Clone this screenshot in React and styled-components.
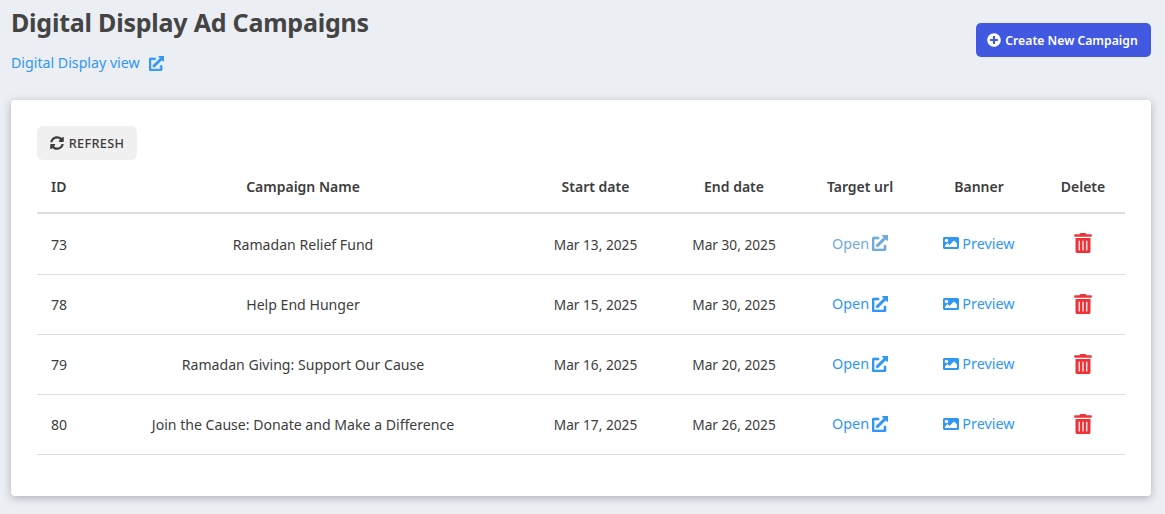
import React from "react";
import styled, { createGlobalStyle } from "styled-components";
import { FaExternalLinkAlt, FaImage, FaPlusCircle, FaSyncAlt, FaTrashAlt } from "react-icons/fa";

const campaigns = [
  { id: 73, name: "Ramadan Relief Fund", start: "Mar 13, 2025", end: "Mar 30, 2025", faded: true },
  { id: 78, name: "Help End Hunger", start: "Mar 15, 2025", end: "Mar 30, 2025" },
  { id: 79, name: "Ramadan Giving: Support Our Cause", start: "Mar 16, 2025", end: "Mar 20, 2025" },
  { id: 80, name: "Join the Cause: Donate and Make a Difference", start: "Mar 17, 2025", end: "Mar 26, 2025" },
];

const GlobalStyle = createGlobalStyle`
  html, body {
    margin: 0;
    background: #ebeef3;
    font-family: "Noto Sans", "Open Sans", sans-serif;
  }
`;

const Page = styled.div`
  height: 514px;
  padding: 0 14px 0 11px;
  box-sizing: border-box;
  overflow: hidden;
`;

const Header = styled.header`
  display: flex;
  justify-content: space-between;
  align-items: flex-start;
  height: 84px;
  border-bottom: 1px solid #e8ebf0;
  margin-bottom: 15px;
`;

const Title = styled.h1`
  margin: 5px 0 0;
  font-size: 25px;
  line-height: 34px;
  font-weight: 700;
  color: #444;
  letter-spacing: -0.22px;
`;

const ViewLink = styled.a`
  display: flex;
  align-items: center;
  gap: 9px;
  margin-top: 13px;
  font-size: 14.2px;
  line-height: 22px;
  color: #3097f5;
  svg {
    font-size: 15px;
    stroke: currentColor;
    stroke-width: 20;
  }
`;

const CreateButton = styled.button`
  display: flex;
  align-items: center;
  justify-content: center;
  gap: 4px;
  width: 175px;
  height: 34px;
  margin-top: 23px;
  padding: 0 2px 0 0;
  border: 0;
  border-radius: 5px;
  background: #4059e0;
  color: #fff;
  font-family: inherit;
  font-size: 12.2px;
  font-weight: 600;
  svg {
    font-size: 14px;
  }
`;

const Card = styled.section`
  height: 396px;
  box-sizing: border-box;
  padding: 26px 26px 0;
  background: #fff;
  border-radius: 4px;
  box-shadow: 0 2px 8px rgba(60, 64, 80, 0.35);
`;

const RefreshButton = styled.button`
  display: flex;
  align-items: center;
  justify-content: center;
  gap: 5px;
  width: 100px;
  height: 34px;
  padding: 0;
  border: 0;
  border-radius: 6px;
  background: #f0f0f0;
  color: #3c3c3c;
  font-family: inherit;
  font-size: 12.7px;
  font-weight: 500;
  letter-spacing: 0.3px;
  svg {
    font-size: 14px;
  }
`;

const Table = styled.table`
  width: 1088px;
  table-layout: fixed;
  border-collapse: separate;
  border-spacing: 0;
  color: #3d3d3d;
`;

const HeadCell = styled.th`
  box-sizing: border-box;
  height: 54px;
  padding: 0 0 0 ${(p) => (p.$left ? "14px" : "0")};
  border-bottom: 2px solid #dcdcdc;
  text-align: ${(p) => (p.$left ? "left" : "center")};
  font-size: 14px;
  font-weight: 600;
`;

const Row = styled.tr`
  height: 60px;
  &:first-child {
    height: 61px;
  }
`;

const Cell = styled.td`
  box-sizing: border-box;
  padding: 0 0 0 ${(p) => (p.$left ? "14px" : "0")};
  border-bottom: 1px solid #dcdcdc;
  text-align: ${(p) => (p.$left ? "left" : "center")};
  font-size: ${(p) => (p.$date ? "13.7px" : "14.1px")};
`;

const ActionLink = styled.a`
  display: inline-flex;
  align-items: center;
  vertical-align: middle;
  gap: 3px;
  margin-bottom: 2px;
  font-size: 14.4px;
  color: ${(p) => (p.$faded ? "#6fabdc" : "#3097f5")};
  svg {
    font-size: 16px;
  }
`;

const OpenIcon = styled(FaExternalLinkAlt)`
  stroke: currentColor;
  stroke-width: 20;
`;

const DeleteIcon = styled(FaTrashAlt)`
  display: block;
  margin: -2px auto 0;
  font-size: 20px;
  color: #ee3338;
`;

const columns = [43, 446, 139, 138, 114, 124, 84];

export default function App() {
  return (
    <Page>
      <GlobalStyle />
      <Header>
        <div>
          <Title>Digital Display Ad Campaigns</Title>
          <ViewLink>
            Digital Display view <FaExternalLinkAlt />
          </ViewLink>
        </div>
        <CreateButton>
          <FaPlusCircle /> Create New Campaign
        </CreateButton>
      </Header>
      <Card>
        <RefreshButton>
          <FaSyncAlt /> REFRESH
        </RefreshButton>
        <Table>
          <colgroup>
            {columns.map((w, i) => (
              <col key={i} width={w} />
            ))}
          </colgroup>
          <thead>
            <tr>
              <HeadCell $left>ID</HeadCell>
              <HeadCell>Campaign Name</HeadCell>
              <HeadCell>Start date</HeadCell>
              <HeadCell>End date</HeadCell>
              <HeadCell>Target url</HeadCell>
              <HeadCell>Banner</HeadCell>
              <HeadCell>Delete</HeadCell>
            </tr>
          </thead>
          <tbody>
            {campaigns.map((c) => (
              <Row key={c.id}>
                <Cell $left>{c.id}</Cell>
                <Cell>{c.name}</Cell>
                <Cell $date>{c.start}</Cell>
                <Cell $date>{c.end}</Cell>
                <Cell>
                  <ActionLink $faded={c.faded}>
                    Open <OpenIcon />
                  </ActionLink>
                </Cell>
                <Cell>
                  <ActionLink>
                    <FaImage /> Preview
                  </ActionLink>
                </Cell>
                <Cell>
                  <DeleteIcon />
                </Cell>
              </Row>
            ))}
          </tbody>
        </Table>
      </Card>
    </Page>
  );
}
